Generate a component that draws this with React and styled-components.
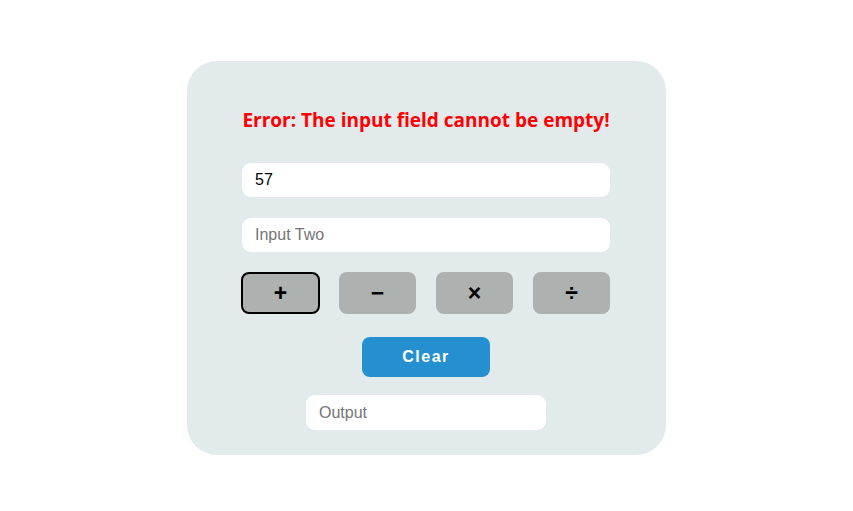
import React, { useState } from "react";
import styled, { createGlobalStyle } from "styled-components";

const Global = createGlobalStyle`
  html, body { margin: 0; padding: 0; background: #ffffff; }
  body { font-family: "Liberation Sans", Arial, sans-serif; }
`;

const Page = styled.div`
  display: flex;
  justify-content: center;
  padding-top: 61px;
`;

const Card = styled.div`
  width: 479px;
  height: 394px;
  box-sizing: border-box;
  background: #e3eaec;
  border-radius: 30px;
  display: flex;
  flex-direction: column;
  align-items: center;
  padding-top: 45px;
  padding-right: 1px;
`;

const ErrorText = styled.h2`
  margin: 0;
  color: #ff0000;
  font-family: "Open Sans", "Noto Sans", sans-serif;
  font-weight: 700;
  font-size: 19px;
  line-height: 28px;
`;

const Field = styled.input`
  box-sizing: border-box;
  width: ${(p) => p.$w || 368}px;
  height: ${(p) => p.$h || 34}px;
  margin-top: ${(p) => p.$mt}px;
  border: none;
  outline: none;
  border-radius: 9px;
  background: #ffffff;
  padding: 0 13px;
  font-family: "Liberation Sans", Arial, sans-serif;
  font-size: 16px;
  color: #000;
  &::placeholder { color: #757575; }
`;

const OpRow = styled.div`
  display: grid;
  grid-template-columns: repeat(4, 77px);
  gap: 20px;
  width: 368px;
  margin-top: 20px;
`;

const OpButton = styled.button`
  height: 42px;
  box-sizing: border-box;
  border-radius: 8px;
  background: #adb1af;
  border: ${(p) => (p.$active ? "2px solid #000" : "none")};
  width: ${(p) => (p.$active ? "79px" : "77px")};
  margin-left: ${(p) => (p.$active ? "-1px" : "0")};
  font-family: "Liberation Sans", Arial, sans-serif;
  font-weight: 700;
  font-size: 23px;
  color: #000;
  display: flex;
  align-items: center;
  justify-content: center;
  padding: 0;
`;

const ClearButton = styled.button`
  margin-top: 23px;
  width: 128px;
  height: 40px;
  border: none;
  border-radius: 8px;
  background: #2490cf;
  color: #ffffff;
  font-family: "Liberation Sans", Arial, sans-serif;
  font-weight: 700;
  font-size: 16px;
  letter-spacing: 1.5px;
`;

export default function App() {
  const [a, setA] = useState("57");
  const [b, setB] = useState("");
  return (
    <>
      <Global />
      <Page>
        <Card>
          <ErrorText>Error: The input field cannot be empty!</ErrorText>
          <Field $mt={29} value={a} onChange={(e) => setA(e.target.value)} />
          <Field $mt={21} placeholder="Input Two" value={b} onChange={(e) => setB(e.target.value)} />
          <OpRow>
            <OpButton $active>+</OpButton>
            <OpButton>−</OpButton>
            <OpButton>×</OpButton>
            <OpButton>÷</OpButton>
          </OpRow>
          <ClearButton>Clear</ClearButton>
          <Field $mt={18} $w={240} $h={35} placeholder="Output" readOnly />
        </Card>
      </Page>
    </>
  );
}
